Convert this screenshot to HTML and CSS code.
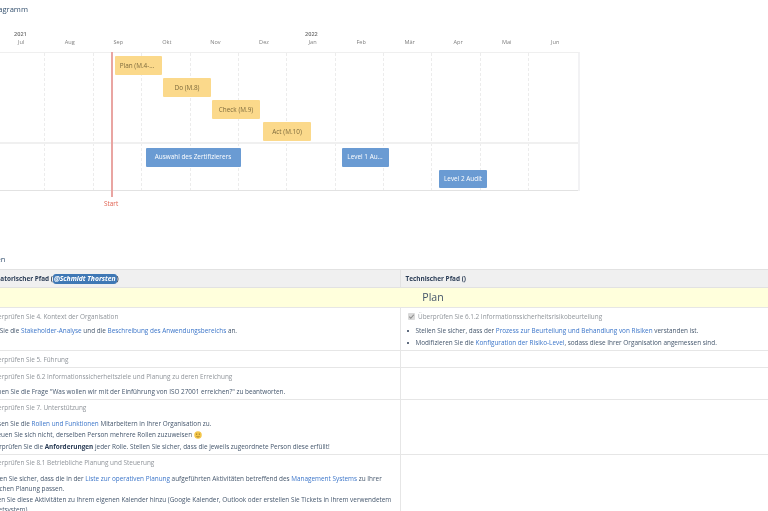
FILE: index.html
```html
<!DOCTYPE html>
<html lang="de">
<head>
<meta charset="utf-8">
<title>Projektplan</title>
<link rel="stylesheet" href="styles.css">
</head>
<body>
<div class="page">
  <h2 class="title first">Gantt-Diagramm</h2>
  <section class="gantt">
    <div class="years"><span class="year">2021</span><span class="year y2022">2022</span></div>
    <div class="months">
      <span>Jul</span><span>Aug</span><span>Sep</span><span>Okt</span><span>Nov</span><span>Dez</span><span>Jan</span><span>Feb</span><span>Mär</span><span>Apr</span><span>Mai</span><span>Jun</span>
    </div>
    <div class="chart">
      <div class="cols"><i></i><i></i><i></i><i></i><i></i><i></i><i></i><i></i><i></i><i></i><i></i><i></i></div>
      <div class="lane lane-a"></div>
      <div class="lane lane-b"></div>
      <div class="bar yellow b-plan">Plan (M.4-...</div>
      <div class="bar yellow b-do">Do (M.8)</div>
      <div class="bar yellow b-check">Check (M.9)</div>
      <div class="bar yellow b-act">Act (M.10)</div>
      <div class="bar blue b-ausw">Auswahl des Zertifizierers</div>
      <div class="bar blue b-l1">Level 1 Au...</div>
      <div class="bar blue b-l2">Level 2 Audit</div>
      <div class="start-line"></div>
      <div class="start-label">Start</div>
    </div>
  </section>
  <h2 class="title second">Aufgaben</h2>
  <table class="plan">
    <colgroup><col class="c1"><col class="c2"></colgroup>
    <thead>
      <tr>
        <th class="th-org">Organisatorischer Pfad (<span class="mention">@Schmidt Thorsten</span>)</th>
        <th>Technischer Pfad ()</th>
      </tr>
    </thead>
    <tbody>
      <tr class="phase"><td colspan="2">Plan</td></tr>
      <tr class="r1">
        <td>
          <div class="task"><span class="check"></span>Überprüfen Sie 4. Kontext der Organisation</div>
          <ul><li>Wie Sie die <a>Stakeholder-Analyse</a> und die <a>Beschreibung des Anwendungsbereichs</a> an.</li></ul>
        </td>
        <td>
          <div class="task"><span class="check on"><svg viewBox="0 0 8 8"><path d="M1.5 4.2 3.2 6 6.6 2" fill="none" stroke="#8a8a8a" stroke-width="1.2"/></svg></span>Überprüfen Sie 6.1.2 Informationssicherheitsrisikobeurteilung</div>
          <ul>
            <li>Stellen Sie sicher, dass der <a>Prozess zur Beurteilung und Behandlung von Risiken</a> verstanden ist.</li>
            <li>Modifizieren Sie die <a>Konfiguration der Risiko-Level</a>, sodass diese Ihrer Organisation angemessen sind.</li>
          </ul>
        </td>
      </tr>
      <tr class="r2">
        <td><div class="task"><span class="check"></span>Überprüfen Sie 5. Führung</div></td>
        <td></td>
      </tr>
      <tr class="r3">
        <td>
          <div class="task"><span class="check"></span>Überprüfen Sie 6.2 Informationssicherheitsziele und Planung zu deren Erreichung</div>
          <ul><li>Suchen Sie die Frage "Was wollen wir mit der Einführung von ISO 27001 erreichen?" zu beantworten.</li></ul>
        </td>
        <td></td>
      </tr>
      <tr class="r4">
        <td>
          <div class="task"><span class="check"></span>Überprüfen Sie 7. Unterstützung</div>
          <ul>
            <li>Weisen Sie die <a>Rollen und Funktionen</a> Mitarbeitern in Ihrer Organisation zu.</li>
            <li>Scheuen Sie sich nicht, derselben Person mehrere Rollen zuzuweisen <svg class="smile" viewBox="0 0 16 16"><circle cx="8" cy="8" r="7.5" fill="#f3c64a"/><circle cx="5.4" cy="6.2" r="1.1" fill="#7a5a1c"/><circle cx="10.6" cy="6.2" r="1.1" fill="#7a5a1c"/><path d="M4.6 10a3.8 3.8 0 0 0 6.8 0" fill="none" stroke="#7a5a1c" stroke-width="1.1"/></svg></li>
            <li>Überprüfen Sie die <b>Anforderungen</b> jeder Rolle. Stellen Sie sicher, dass die jeweils zugeordnete Person diese erfüllt!</li>
          </ul>
        </td>
        <td></td>
      </tr>
      <tr class="r5">
        <td>
          <div class="task"><span class="check"></span>Überprüfen Sie 8.1 Betriebliche Planung und Steuerung</div>
          <ul>
            <li>Stellen Sie sicher, dass die in der <a>Liste zur operativen Planung</a> aufgeführten Aktivitäten betreffend des <a>Management Systems</a> zu Ihrer täglichen Planung passen.</li>
            <li>Fügen Sie diese Aktivitäten zu Ihrem eigenen Kalender hinzu (Google Kalender, Outlook oder erstellen Sie Tickets in Ihrem verwendetem Ticketsystem).</li>
          </ul>
        </td>
        <td></td>
      </tr>
    </tbody>
  </table>
</div>
</body>
</html>
```
FILE: styles.css
```css
html, body { margin: 0; padding: 0; height: 511px; overflow: hidden; background: #fff; }
body { font-family: "Open Sans", "Liberation Sans", sans-serif; font-size: 6.4px; color: #44566c; }
.page { margin-left: -28.5px; width: 923px; padding-top: 4px; filter: blur(0.25px); }
.title { margin: 0; font-size: 7.6px; line-height: 10px; font-weight: 400; color: #34506e; }
.title.first { margin-left: -3px; }
.title.second { margin-top: 63px; }

.gantt { margin-left: 25.5px; margin-top: 17px; width: 582.5px; }
.years { height: 7px; display: flex; line-height: 7px; font-size: 5.6px; font-weight: 600; color: #6b6b6b; }
.year { width: 291px; padding-left: 17px; box-sizing: border-box; }
.months { display: flex; height: 14px; line-height: 8px; font-size: 5.6px; color: #808080; }
.months span { width: 48.55px; text-align: center; }

.chart { position: relative; height: 139px; border-top: 1px solid #efefef; border-right: 2px solid #f2f2f4; box-sizing: border-box; width: 582.5px; }
.cols { position: absolute; inset: 0; display: flex; }
.cols i { width: 48.55px; box-sizing: border-box; border-right: 1px dashed #ececec; }
.cols i:last-child { border-right: 0; }
.lane { position: relative; box-sizing: border-box; }
.lane-a { height: 91px; border-bottom: 2px solid #f0f0f0; }
.lane-b { height: 47px; border-bottom: 1px solid #e2e2e2; }
.bar { position: absolute; height: 19px; line-height: 19px; border-radius: 1px; font-size: 6.4px; text-align: center; box-sizing: border-box; white-space: nowrap; overflow: hidden; }
.yellow { background: #fbd98b; color: #7d6a3c; }
.blue { background: #6a9bd3; color: #fff; font-weight: 400; height: 18.5px; line-height: 18.5px; }
.b-plan { left: 118px; top: 3px; width: 47px; padding-right: 3px; }
.b-do { left: 166px; top: 25px; width: 48px; }
.b-check { left: 215px; top: 47px; width: 48px; }
.b-act { left: 266px; top: 69px; width: 48px; }
.b-ausw { left: 148.5px; top: 95px; width: 95px; }
.b-l1 { left: 345px; top: 95px; width: 47px; padding-right: 1px; }
.b-l2 { left: 442px; top: 116.5px; width: 48px; }
.start-line { position: absolute; left: 114px; top: -1px; width: 1.5px; height: 145px; background: #e9a5a2; }
.start-label { position: absolute; left: 107px; top: 147px; font-size: 6.4px; line-height: 8px; color: #e0604f; }

.plan { margin-top: 5px; width: 923px; border-collapse: collapse; table-layout: fixed; }
.c1 { width: 428.5px; }
.plan th, .plan td { border: 1px solid #e6e6e6; padding: 0; vertical-align: top; text-align: left; }
.plan th { background: #f0f0f0; height: 17px; line-height: 17px; font-weight: 700; font-size: 6.4px; color: #2b3d56; padding-left: 4.5px; border-color: #e2e2e2; }
.plan .th-org { padding-left: 3px; }
.mention { display: inline-block; background: #3f78b5; color: #fff; font-size: 6.75px; font-style: italic; line-height: 10px; border-radius: 3px; padding: 0 1px; }
.phase td { background: #ffffdc; height: 19px; line-height: 19px; font-size: 10.6px; text-align: center; color: #44546a; }
.task { display: flex; align-items: center; height: 10px; margin-top: 3px; padding-left: 7px; color: #8f949a; white-space: nowrap; }
.check { width: 7px; height: 7px; margin-right: 3px; flex: none; background: #d9d9d9; border-radius: 1px; display: block; }
.check svg { display: block; width: 7px; height: 7px; }
ul { margin: 5px 0 0; padding: 0 0 0 14.5px; list-style: none; }
li { position: relative; line-height: 10px; margin-bottom: 1.5px; }
li::before { content: ""; position: absolute; left: -9px; top: 4px; width: 2px; height: 2px; border-radius: 50%; background: #2b3d56; }
a { color: #3b75c9; }
b { font-weight: 700; color: #2b3d56; }
.smile { display: inline-block; width: 8px; height: 8px; vertical-align: -1.5px; }
.r1 td { height: 42px; }
.r2 td { height: 16px; }
.r3 td { height: 31px; }
.r3 ul { margin-top: 5.5px; }
.r4 td { height: 54px; }
.r4 .task, .r5 .task { margin-top: 2px; }
.r4 ul, .r5 ul { margin-top: 6.5px; }
```
